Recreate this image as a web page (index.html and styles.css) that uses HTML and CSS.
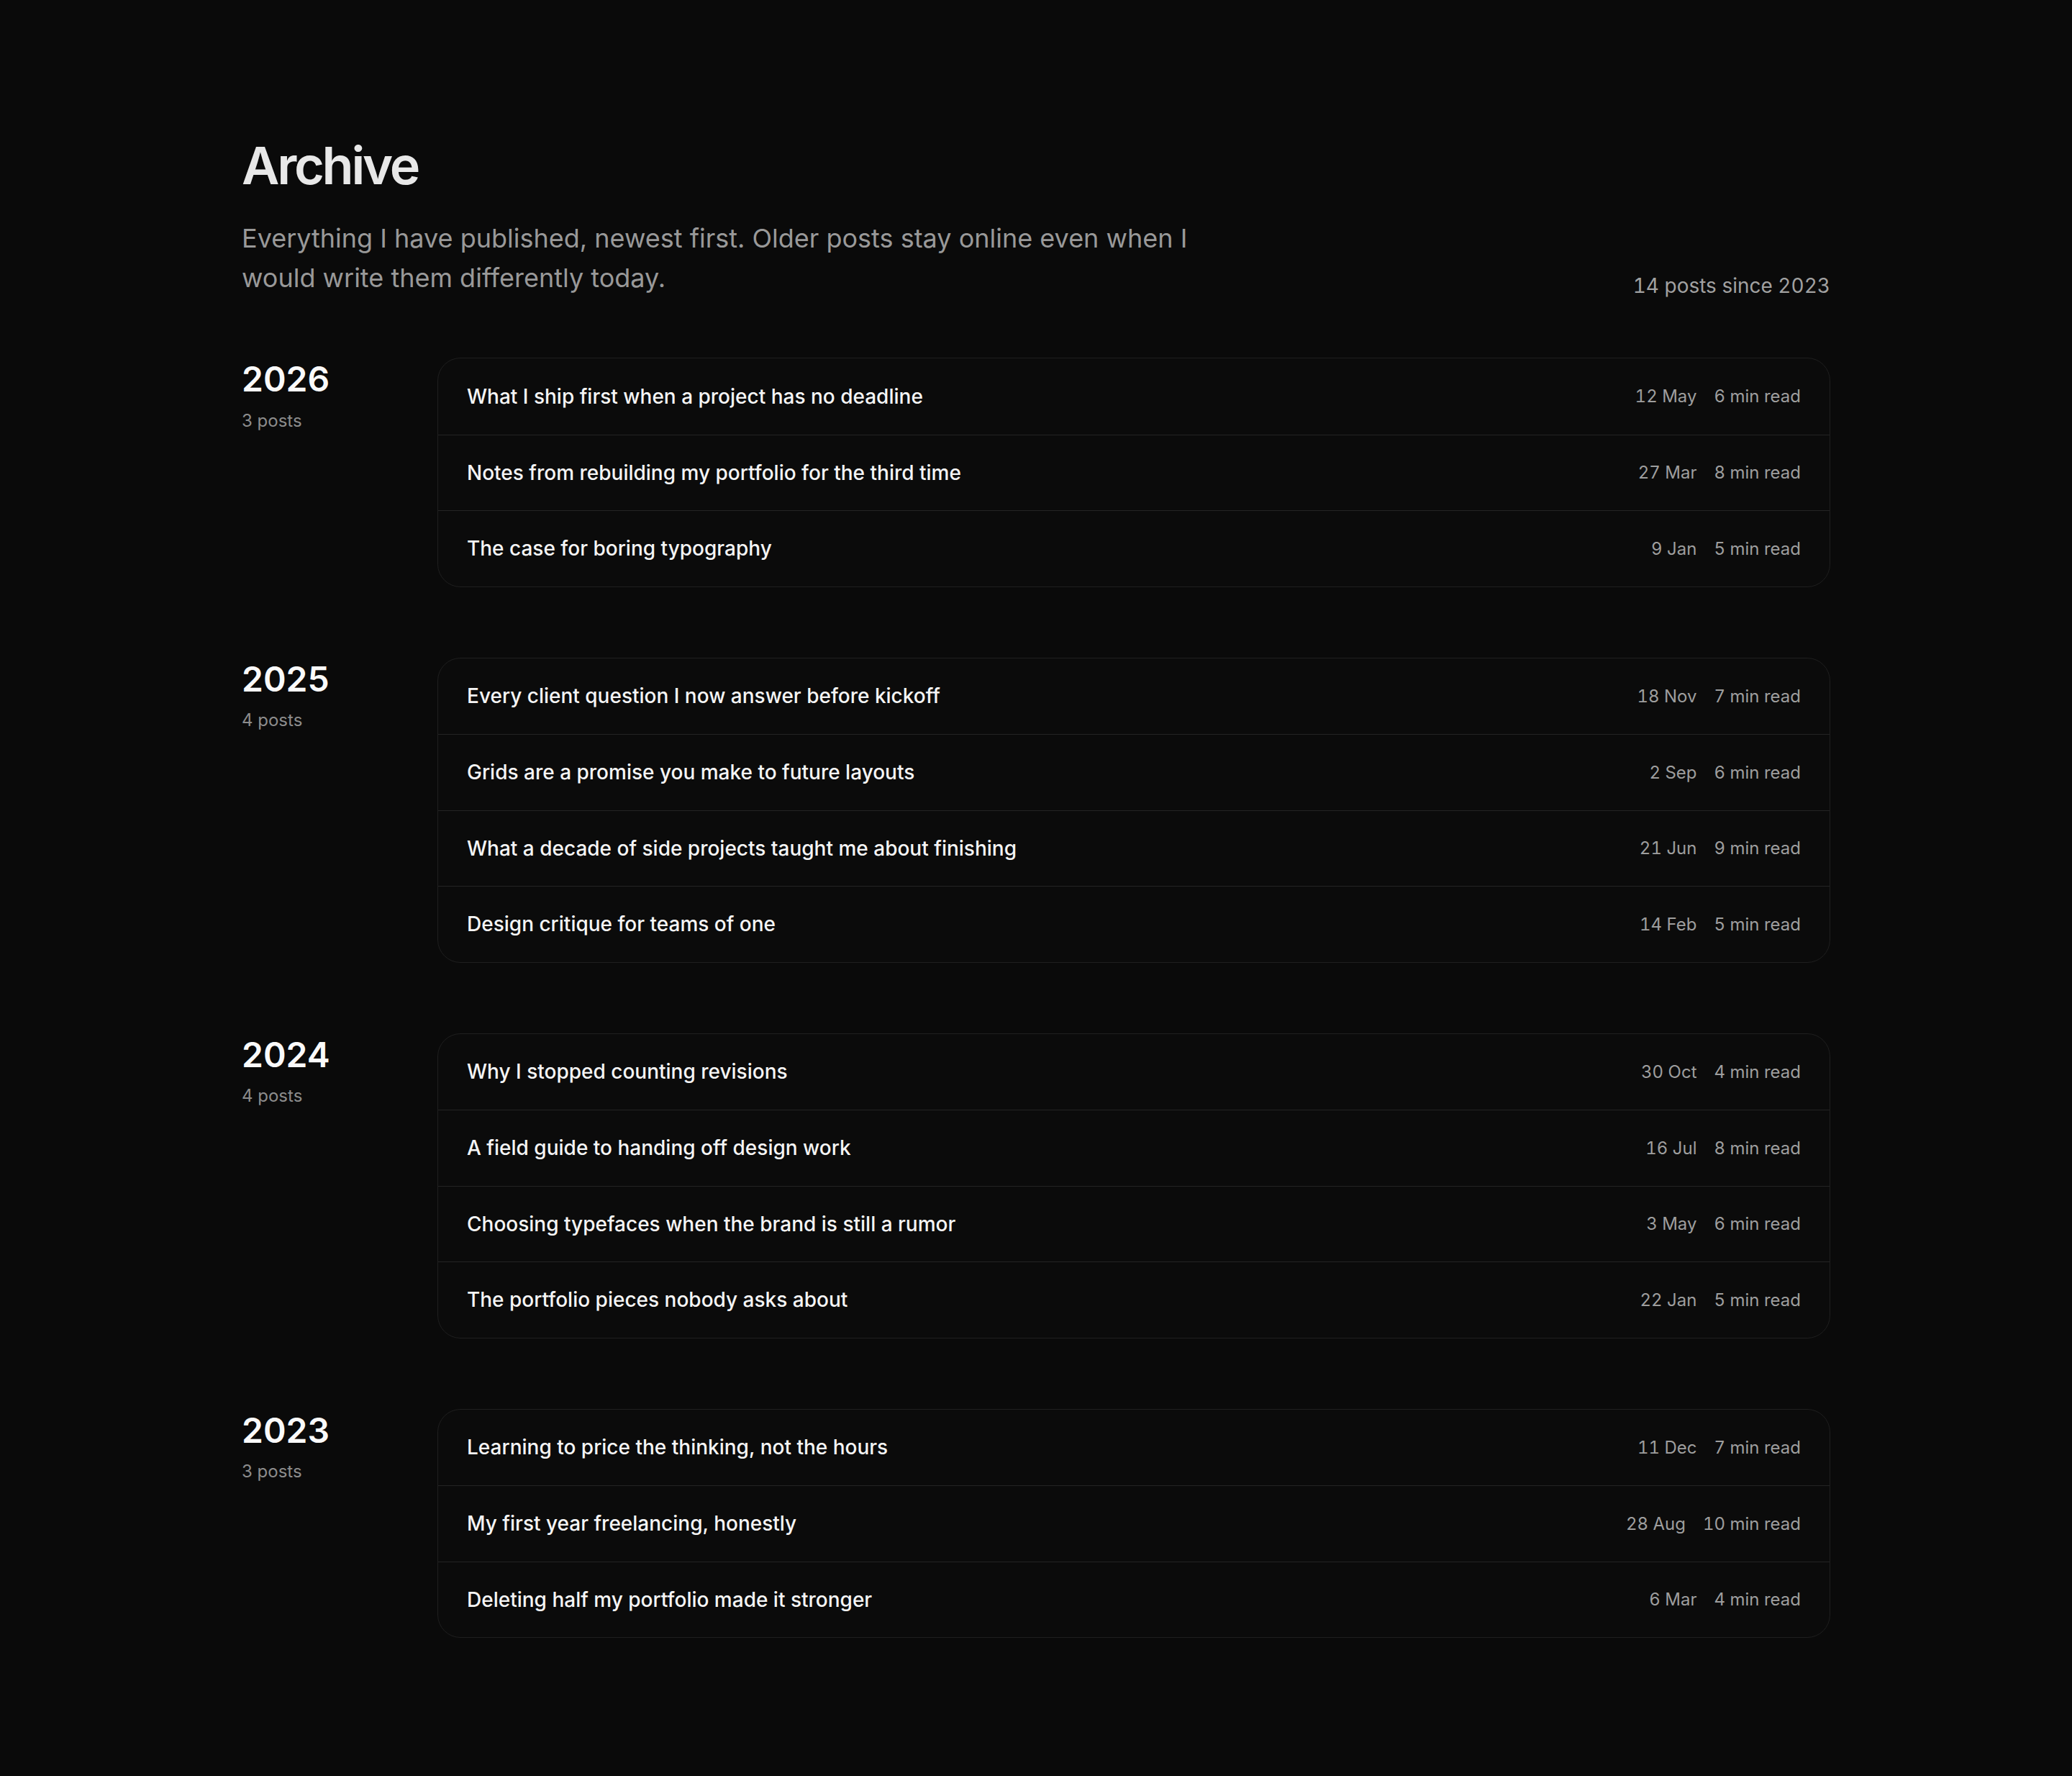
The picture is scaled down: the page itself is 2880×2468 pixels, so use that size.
FILE: index.html
```html
<!DOCTYPE html>
<html lang="en">
<head>
    <meta charset="UTF-8">
    <meta name="viewport" content="width=device-width, initial-scale=1.0">
    <title>Archive</title>
    <link rel="stylesheet" href="styles.css">
</head>
<body>
    <main class="container">
        <header class="archive-header">
            <div class="header-text">
                <h1>Archive</h1>
                <p class="intro">Everything I have published, newest first. Older posts stay online even when I would write them differently today.</p>
            </div>
            <p class="post-total">14 posts since 2023</p>
        </header>

        <section class="year-group">
            <div class="year-label">
                <h2>2026</h2>
                <p class="year-count">3 posts</p>
            </div>
            <ul class="post-list">
                <li class="post-row">
                    <a href="#" class="post-title">What I ship first when a project has no deadline</a>
                    <div class="post-meta"><span>12 May</span><span>6 min read</span></div>
                </li>
                <li class="post-row">
                    <a href="#" class="post-title">Notes from rebuilding my portfolio for the third time</a>
                    <div class="post-meta"><span>27 Mar</span><span>8 min read</span></div>
                </li>
                <li class="post-row">
                    <a href="#" class="post-title">The case for boring typography</a>
                    <div class="post-meta"><span>9 Jan</span><span>5 min read</span></div>
                </li>
            </ul>
        </section>

        <section class="year-group">
            <div class="year-label">
                <h2>2025</h2>
                <p class="year-count">4 posts</p>
            </div>
            <ul class="post-list">
                <li class="post-row">
                    <a href="#" class="post-title">Every client question I now answer before kickoff</a>
                    <div class="post-meta"><span>18 Nov</span><span>7 min read</span></div>
                </li>
                <li class="post-row">
                    <a href="#" class="post-title">Grids are a promise you make to future layouts</a>
                    <div class="post-meta"><span>2 Sep</span><span>6 min read</span></div>
                </li>
                <li class="post-row">
                    <a href="#" class="post-title">What a decade of side projects taught me about finishing</a>
                    <div class="post-meta"><span>21 Jun</span><span>9 min read</span></div>
                </li>
                <li class="post-row">
                    <a href="#" class="post-title">Design critique for teams of one</a>
                    <div class="post-meta"><span>14 Feb</span><span>5 min read</span></div>
                </li>
            </ul>
        </section>

        <section class="year-group">
            <div class="year-label">
                <h2>2024</h2>
                <p class="year-count">4 posts</p>
            </div>
            <ul class="post-list">
                <li class="post-row">
                    <a href="#" class="post-title">Why I stopped counting revisions</a>
                    <div class="post-meta"><span>30 Oct</span><span>4 min read</span></div>
                </li>
                <li class="post-row">
                    <a href="#" class="post-title">A field guide to handing off design work</a>
                    <div class="post-meta"><span>16 Jul</span><span>8 min read</span></div>
                </li>
                <li class="post-row">
                    <a href="#" class="post-title">Choosing typefaces when the brand is still a rumor</a>
                    <div class="post-meta"><span>3 May</span><span>6 min read</span></div>
                </li>
                <li class="post-row">
                    <a href="#" class="post-title">The portfolio pieces nobody asks about</a>
                    <div class="post-meta"><span>22 Jan</span><span>5 min read</span></div>
                </li>
            </ul>
        </section>

        <section class="year-group">
            <div class="year-label">
                <h2>2023</h2>
                <p class="year-count">3 posts</p>
            </div>
            <ul class="post-list">
                <li class="post-row">
                    <a href="#" class="post-title">Learning to price the thinking, not the hours</a>
                    <div class="post-meta"><span>11 Dec</span><span>7 min read</span></div>
                </li>
                <li class="post-row">
                    <a href="#" class="post-title">My first year freelancing, honestly</a>
                    <div class="post-meta"><span>28 Aug</span><span>10 min read</span></div>
                </li>
                <li class="post-row">
                    <a href="#" class="post-title">Deleting half my portfolio made it stronger</a>
                    <div class="post-meta"><span>6 Mar</span><span>4 min read</span></div>
                </li>
            </ul>
        </section>
    </main>
</body>
</html>
```

FILE: styles.css
```css
* {
    margin: 0;
    padding: 0;
    box-sizing: border-box;
}

body {
    background-color: #0a0a0a;
    font-family: 'Inter', 'Liberation Sans', sans-serif;
    color: #f5f5f5;
}

.container {
    max-width: 2208px;
    margin: 0 auto;
    padding: 190px 0 192px;
}

/* Header */
.archive-header {
    display: flex;
    justify-content: space-between;
    align-items: flex-end;
    margin-bottom: 83px;
}

.archive-header h1 {
    font-size: 72px;
    font-weight: 600;
    line-height: 1.1;
    letter-spacing: -0.045em;
    color: #e8e8e8;
    margin-bottom: 35px;
}

.intro {
    max-width: 1380px;
    font-size: 36px;
    line-height: 55px;
    color: #999999;
}

.post-total {
    font-size: 28px;
    line-height: 1.2;
    color: #a1a1a1;
    font-variant-numeric: tabular-nums;
    white-space: nowrap;
}

/* Year Groups */
.year-group {
    display: grid;
    grid-template-columns: 240px 1fr;
    gap: 32px;
    margin-bottom: 98px;
}

.year-group:last-child {
    margin-bottom: 0;
}

.year-label h2 {
    font-size: 48px;
    font-weight: 600;
    line-height: 1.2;
    color: #fafafa;
    margin-top: 1px;
}

.year-count {
    margin-top: 11px;
    font-size: 24px;
    line-height: 1.5;
    color: #8c8c8c;
}

/* Post List */
.post-list {
    list-style: none;
    border: 1px solid #1f1f1f;
    border-radius: 32px;
    background: #0b0b0b;
    overflow: hidden;
}

.post-row {
    display: flex;
    justify-content: space-between;
    align-items: center;
    min-height: 105.5px;
    padding: 0 40px;
}

.post-row + .post-row {
    border-top: 1px solid #242424;
}

.post-title {
    font-size: 28px;
    font-weight: 500;
    color: #f5f5f5;
    text-decoration: none;
}

.post-meta {
    display: flex;
    gap: 24px;
    font-size: 24px;
    font-variant-numeric: tabular-nums;
    color: #9e9e9e;
    white-space: nowrap;
}
```
